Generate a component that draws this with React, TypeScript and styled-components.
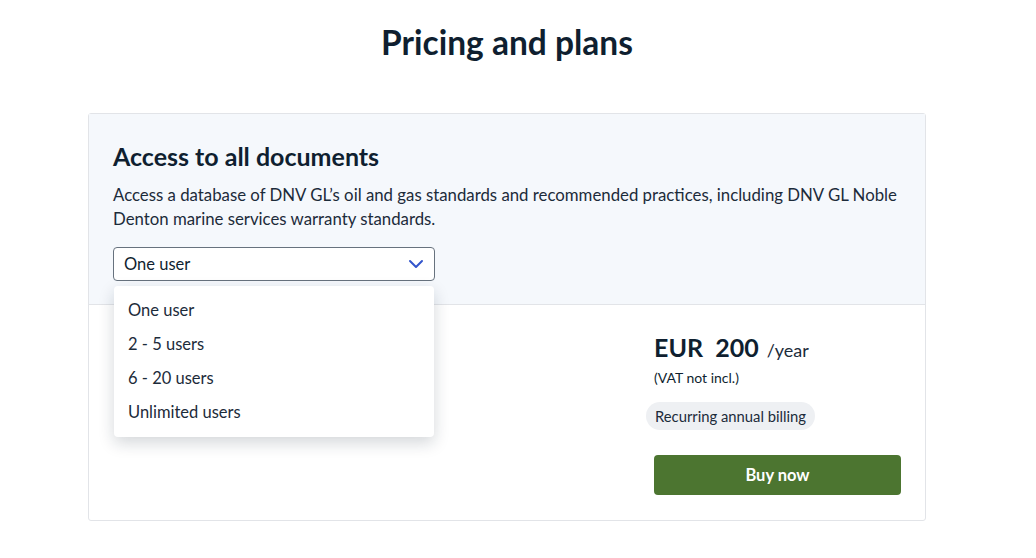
import React from 'react';
import styled, { createGlobalStyle } from 'styled-components';

const GlobalStyle = createGlobalStyle`
  body {
    margin: 0;
    background: #ffffff;
    font-family: Lato, "Noto Sans", sans-serif;
    color: #0f1f30;
  }
`;

const options = ['One user', '2 - 5 users', '6 - 20 users', 'Unlimited users'];

const App: React.FC = () => {
  return <>
    <GlobalStyle />
    <Page>
      <Title>Pricing and plans</Title>
      <Card>
        <CardHeader>
          <PlanTitle>Access to all documents</PlanTitle>
          <Description>
            Access a database of DNV GL’s oil and gas standards and recommended practices, including DNV GL Noble Denton marine services warranty standards.
          </Description>
          <SelectWrapper>
            <Select>
              <span>One user</span>
              <svg width="16" height="10" viewBox="0 0 16 10">
                <path d="M2 2 L8 8 L14 2" fill="none" stroke="#3355cc" strokeWidth="2" strokeLinecap="round" strokeLinejoin="round" />
              </svg>
            </Select>
            <Menu>
              {options.map(o => <MenuItem key={o}>{o}</MenuItem>)}
            </Menu>
          </SelectWrapper>
        </CardHeader>
        <CardBody>
          <PriceColumn>
            <PriceRow>
              <Amount>EUR&nbsp; 200</Amount>
              <Period>/year</Period>
            </PriceRow>
            <Vat>(VAT not incl.)</Vat>
            <Pill>Recurring annual billing</Pill>
            <BuyButton type="button">Buy now</BuyButton>
          </PriceColumn>
        </CardBody>
      </Card>
    </Page>
  </>;
};

export default App;

const Page = styled.div`
  width: 838px;
  margin-left: 88px;
  padding-top: 22px;
`;

const Title = styled.h1`
  margin: 0 0 51px;
  text-align: center;
  font-size: 33.5px;
  line-height: 40px;
  font-weight: 700;
  color: #0f1f30;
`;

const Card = styled.div`
  border: 1px solid #e2e4e8;
  border-radius: 3px;
  overflow: visible;
`;

const CardHeader = styled.div`
  background: #f5f8fc;
  padding: 27px 24px 23px;
  border-bottom: 1px solid #e2e4e8;
`;

const PlanTitle = styled.h2`
  margin: 0 0 12px;
  font-size: 25px;
  line-height: 30px;
  font-weight: 700;
`;

const Description = styled.p`
  margin: 0 0 16px;
  font-size: 16.8px;
  line-height: 24px;
  color: #1c2b3a;
`;

const SelectWrapper = styled.div`
  position: relative;
  width: 322px;
`;

const Select = styled.div`
  box-sizing: border-box;
  height: 34px;
  border: 1px solid #67727e;
  border-radius: 4px;
  background: #ffffff;
  display: flex;
  align-items: center;
  justify-content: space-between;
  padding: 0 10px 0 10px;
  font-size: 16.5px;
`;

const Menu = styled.div`
  position: absolute;
  top: 39px;
  left: 1px;
  right: 1px;
  background: #ffffff;
  border-radius: 4px;
  box-shadow: 0 6px 16px rgba(15, 31, 48, 0.18);
  padding: 7px 0 8px;
  z-index: 2;
`;

const MenuItem = styled.div`
  height: 34px;
  line-height: 34px;
  padding: 0 14px;
  font-size: 16.5px;
  color: #1c2b3a;
`;

const CardBody = styled.div`
  display: flex;
  justify-content: flex-end;
  padding: 26px 24px 25px;
`;

const PriceColumn = styled.div`
  width: 247px;
  display: flex;
  flex-direction: column;
  align-items: flex-start;
`;

const PriceRow = styled.div`
  display: flex;
  align-items: baseline;
  gap: 8px;
`;

const Amount = styled.span`
  font-size: 25px;
  line-height: 32px;
  font-weight: 700;
`;

const Period = styled.span`
  font-size: 18px;
  color: #1c2b3a;
`;

const Vat = styled.div`
  margin-top: 6px;
  font-size: 14px;
  line-height: 18px;
`;

const Pill = styled.div`
  margin: 15px 0 0 -8px;
  background: #eef0f3;
  border-radius: 14px;
  padding: 0 9px;
  height: 28px;
  line-height: 28px;
  font-size: 14.8px;
  color: #1c2b3a;
`;

const BuyButton = styled.button`
  margin-top: 25px;
  width: 247px;
  height: 40px;
  border: none;
  border-radius: 4px;
  background: #4c7530;
  color: #ffffff;
  font-family: inherit;
  font-size: 16.5px;
  font-weight: 700;
`;
